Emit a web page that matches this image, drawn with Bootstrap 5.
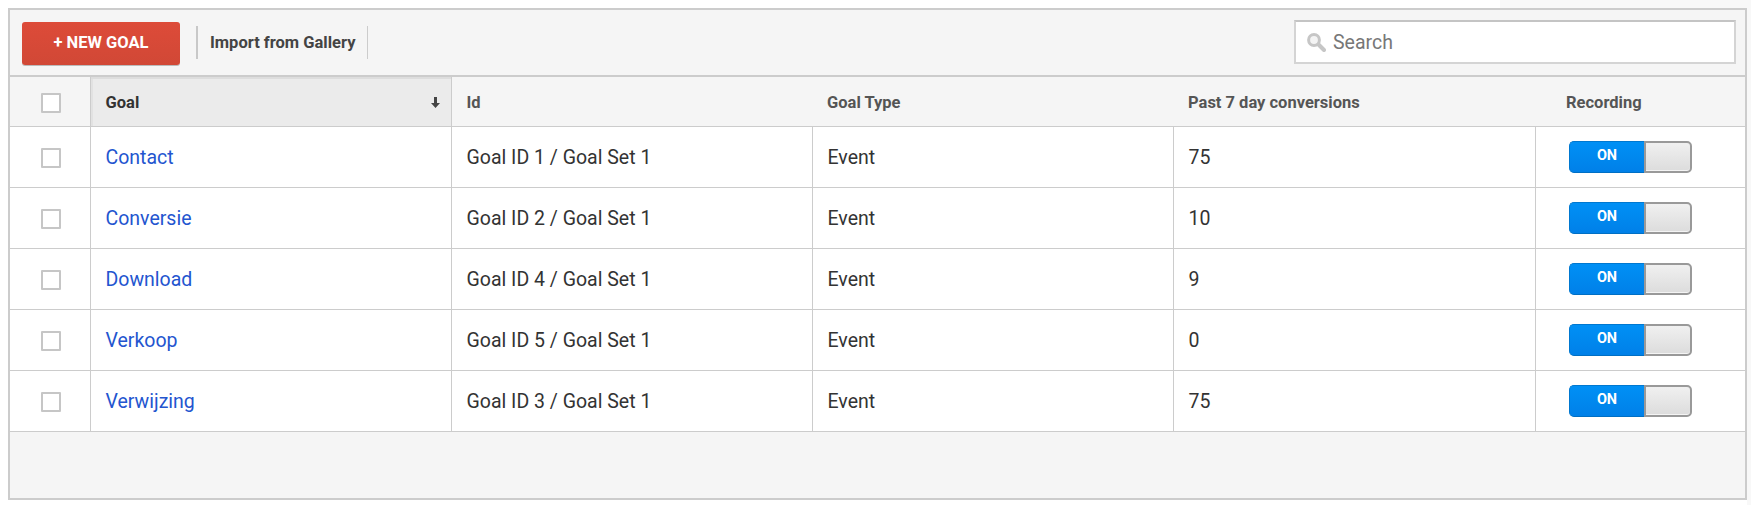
<!DOCTYPE html>
<html lang="en">
<head>
<meta charset="utf-8">
<title>Goals</title>
<link rel="stylesheet" href="https://cdn.jsdelivr.net/npm/bootstrap@5.3.0/dist/css/bootstrap.min.css">
<style>
html { background: #fff; }
body { font-family: Roboto, "Liberation Sans", sans-serif; color: #333; padding: 8px 4px 0 8px; width: 1751px; height: 505px; overflow: hidden;
  background: linear-gradient(#f8f8f8, #f8f8f8) 1500px 0 / 251px 8px no-repeat, linear-gradient(#f8f8f8, #f8f8f8) 1747px 0 / 4px 505px no-repeat, #fff; }
.goal-panel { border: 2px solid #ccc; background: #f5f5f5; height: 492px; }
.goal-bar { height: 65px; padding: 12px 9px 0 12px; }
.btn-new { width: 158px; height: 43px; background: linear-gradient(#dd4b39, #d14836); color: #fff; font-size: 16.5px; font-weight: 700; border: 0; border-radius: 3px; padding: 0; box-shadow: 0 1px 0 #bbb; }
.btn-new:hover { background: #d14836; color: #fff; }
.bar-sep { width: 2px; height: 33px; background: #c8c8c8; margin-top: 4px; }
.bar-sep-thin { width: 1px; background: #ccc; margin-left: 12px; }
.import-lnk { font-size: 16.5px; font-weight: 700; color: #444; text-decoration: none; margin: 6px 0 0 12px; line-height: 30px; }
.search-wrap { width: 442px; height: 44px; border: 2px solid #d4d4d4; border-top-color: #c4c4c4; background: #fff; margin-top: -2px; padding-left: 10px; }
.search-wrap input { border: 0; outline: 0; background: transparent; font-size: 19.5px; width: 380px; padding: 2px 0 0; margin-left: 7px; color: #333; font-family: inherit; }
.search-wrap input::placeholder { color: #777; opacity: 1; }
.goal-tbl { width: 100%; table-layout: fixed; border-collapse: collapse; margin: 0; }
.goal-tbl th, .goal-tbl td { padding: 2px 0 0 15px; vertical-align: middle; }
.goal-tbl thead tr { height: 50px; border-top: 2px solid #ccc; border-bottom: 1px solid #ccc; }
.goal-tbl th { font-size: 16.5px; font-weight: 700; color: #555; background: #f5f5f5; padding-top: 4px; }
.goal-tbl th.sorted { background: #ebebeb; color: #333; border-left: 1px solid #ccc; border-right: 1px solid #ccc; box-shadow: inset 0 2px 0 #ddd, inset 2px 0 0 #e2e2e2; position: relative; }
.goal-tbl th.rec-head { padding-left: 31px; }
.sort-arrow { position: absolute; right: 11px; top: 20px; }
.goal-tbl tbody tr { height: 61px; border-bottom: 1px solid #ccc; background: #fff; }
.goal-tbl td { font-size: 19.5px; color: #333; background: #fff; border-left: 1px solid #ccc; }
.goal-tbl td:first-child { border-left: 0; padding: 3px 0 0; }
.goal-tbl td.rec-cell { padding-top: 1px; }
.goal-tbl th:first-child { padding: 4px 0 0; }
.goal-tbl a { color: #2355cf; text-decoration: none; }
.check-box { display: block; width: 20px; height: 20px; border: 2px solid #c6c6c6; background: #fff; margin: 0 auto 0 31px; border-radius: 1px; }
.toggle-sw { display: flex; width: 123px; height: 32px; margin-left: 18px; }
.toggle-on { width: 76px; background: linear-gradient(#0090f5, #0080e8); border: 1px solid #0078d0; border-bottom-color: #006fc4; border-right: 0; border-radius: 5px 0 0 5px; color: #fff; font-size: 14.5px; font-weight: 700; text-align: center; line-height: 28px; }
.toggle-off { flex: 1; background: linear-gradient(#f0f0f0, #dcdcdc); border: 2px solid #999; border-radius: 0 5px 5px 0; margin-left: -1px; box-shadow: inset 0 -1px 0 #f4f4f4; }
</style>
</head>
<body>
<div class="goal-panel">
  <div class="goal-bar d-flex align-items-start">
    <button class="btn btn-new" type="button">+ NEW GOAL</button>
    <span class="bar-sep ms-3"></span>
    <a class="import-lnk" href="#">Import from Gallery</a>
    <span class="bar-sep bar-sep-thin"></span>
    <div class="search-wrap ms-auto d-flex align-items-center">
      <svg width="20" height="20" viewBox="0 0 20 20" aria-hidden="true"><circle cx="8" cy="8" r="5.4" fill="#f4f4f4" stroke="#c6c6c6" stroke-width="3"/><path d="M12.5 12.5l5.5 5.5" stroke="#c6c6c6" stroke-width="4" stroke-linecap="round"/></svg>
      <input type="text" placeholder="Search" aria-label="Search">
    </div>
  </div>
  <table class="table goal-tbl">
    <colgroup><col style="width:80px"><col style="width:361px"><col style="width:361px"><col style="width:361px"><col style="width:362px"><col></colgroup>
    <thead>
      <tr>
        <th><span class="check-box"></span></th>
        <th class="sorted">Goal
          <svg class="sort-arrow" width="9" height="11" viewBox="0 0 9 11" aria-hidden="true"><path d="M3 0h3v6h3l-4.500 5L0 6h3z" fill="#444"/></svg>
        </th>
        <th>Id</th>
        <th>Goal Type</th>
        <th>Past 7 day conversions</th>
        <th class="rec-head">Recording</th>
      </tr>
    </thead>
    <tbody>
      <tr><td><span class="check-box"></span></td><td><a href="#">Contact</a></td><td>Goal ID 1 / Goal Set 1</td><td>Event</td><td>75</td><td class="rec-cell"><div class="toggle-sw"><span class="toggle-on">ON</span><span class="toggle-off"></span></div></td></tr>
      <tr><td><span class="check-box"></span></td><td><a href="#">Conversie</a></td><td>Goal ID 2 / Goal Set 1</td><td>Event</td><td>10</td><td class="rec-cell"><div class="toggle-sw"><span class="toggle-on">ON</span><span class="toggle-off"></span></div></td></tr>
      <tr><td><span class="check-box"></span></td><td><a href="#">Download</a></td><td>Goal ID 4 / Goal Set 1</td><td>Event</td><td>9</td><td class="rec-cell"><div class="toggle-sw"><span class="toggle-on">ON</span><span class="toggle-off"></span></div></td></tr>
      <tr><td><span class="check-box"></span></td><td><a href="#">Verkoop</a></td><td>Goal ID 5 / Goal Set 1</td><td>Event</td><td>0</td><td class="rec-cell"><div class="toggle-sw"><span class="toggle-on">ON</span><span class="toggle-off"></span></div></td></tr>
      <tr><td><span class="check-box"></span></td><td><a href="#">Verwijzing</a></td><td>Goal ID 3 / Goal Set 1</td><td>Event</td><td>75</td><td class="rec-cell"><div class="toggle-sw"><span class="toggle-on">ON</span><span class="toggle-off"></span></div></td></tr>
    </tbody>
  </table>
</div>
<script src="https://cdn.jsdelivr.net/npm/bootstrap@5.3.0/dist/js/bootstrap.bundle.min.js"></script>
</body>
</html>
